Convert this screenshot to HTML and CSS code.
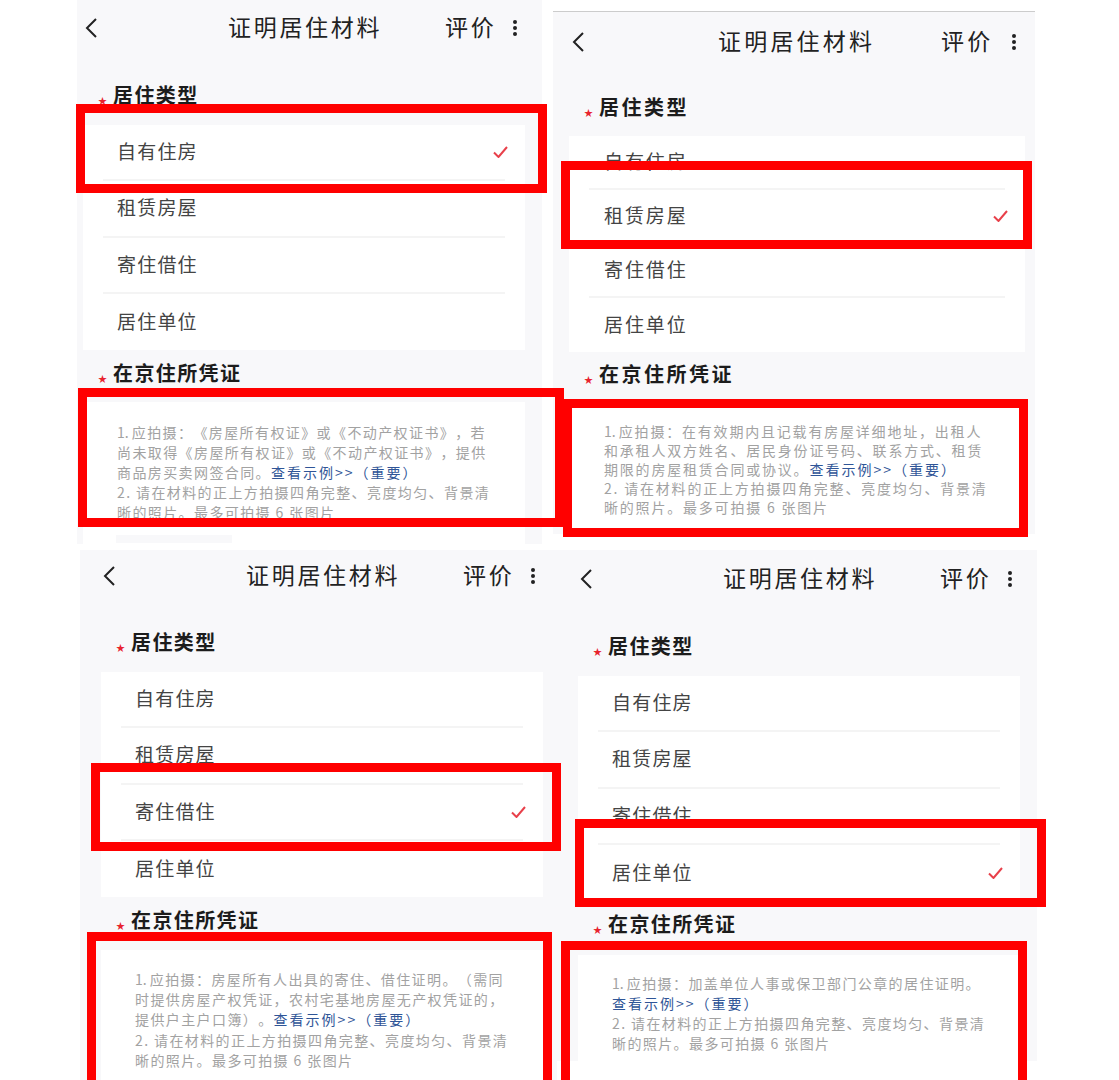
FILE: index.html
```html
<!DOCTYPE html>
<html lang="zh-CN">
<head>
  <meta charset="UTF-8" />
  <title>证明居住材料</title>
  <link rel="stylesheet" href="styles.css">
</head>
<body>
  <svg class="defs" width="0" height="0" aria-hidden="true">
    <symbol id="back" viewBox="0 0 12 20"><path d="M11 1 2 10l9 9" fill="none" stroke="#222" stroke-width="2"/></symbol>
    <symbol id="tick" viewBox="0 0 15 12"><path d="M1 6.5 5.5 11 14 1" fill="none" stroke="#e8404a" stroke-width="2"/></symbol>
  </svg>

  <!-- 自有住房 -->
  <section class="shot shot-1">
    <div class="nav">
      <svg class="back"><use href="#back"/></svg>
      <span class="nav-title">证明居住材料</span>
      <span class="nav-rate">评价</span>
      <span class="nav-more"><i></i><i></i><i></i></span>
    </div>
    <h2 class="sec-title first"><span class="star">★</span>居住类型</h2>
    <div class="card">
      <div class="row">自有住房<svg class="tick"><use href="#tick"/></svg></div>
      <div class="row">租赁房屋</div>
      <div class="row">寄住借住</div>
      <div class="row">居住单位</div>
    </div>
    <h2 class="sec-title"><span class="star">★</span>在京住所凭证</h2>
    <div class="notes">
      <p><span class="num">1. </span>应拍摄：《房屋所有权证》或《不动产权证书》，若<br>尚未取得《房屋所有权证》或《不动产权证书》，提供<br>商品房买卖网签合同。<a>查看示例&gt;&gt;（重要）</a><br>2. 请在材料的正上方拍摄四角完整、亮度均匀、背景清<br>晰的照片。最多可拍摄 6 张图片</p>
      <div class="thumb"></div>
    </div>
  </section>

  <!-- 租赁房屋 -->
  <section class="shot shot-2">
    <div class="nav">
      <svg class="back"><use href="#back"/></svg>
      <span class="nav-title">证明居住材料</span>
      <span class="nav-rate">评价</span>
      <span class="nav-more"><i></i><i></i><i></i></span>
    </div>
    <h2 class="sec-title first"><span class="star">★</span>居住类型</h2>
    <div class="card">
      <div class="row">自有住房</div>
      <div class="row">租赁房屋<svg class="tick"><use href="#tick"/></svg></div>
      <div class="row">寄住借住</div>
      <div class="row">居住单位</div>
    </div>
    <h2 class="sec-title"><span class="star">★</span>在京住所凭证</h2>
    <div class="notes">
      <p><span class="num">1. </span>应拍摄：在有效期内且记载有房屋详细地址，出租人<br>和承租人双方姓名、居民身份证号码、联系方式、租赁<br>期限的房屋租赁合同或协议。<a>查看示例&gt;&gt;（重要）</a><br>2. 请在材料的正上方拍摄四角完整、亮度均匀、背景清<br>晰的照片。最多可拍摄 6 张图片</p>
    </div>
  </section>

  <!-- 寄住借住 -->
  <section class="shot shot-3">
    <div class="nav">
      <svg class="back"><use href="#back"/></svg>
      <span class="nav-title">证明居住材料</span>
      <span class="nav-rate">评价</span>
      <span class="nav-more"><i></i><i></i><i></i></span>
    </div>
    <h2 class="sec-title first"><span class="star">★</span>居住类型</h2>
    <div class="card">
      <div class="row">自有住房</div>
      <div class="row">租赁房屋</div>
      <div class="row">寄住借住<svg class="tick"><use href="#tick"/></svg></div>
      <div class="row">居住单位</div>
    </div>
    <h2 class="sec-title"><span class="star">★</span>在京住所凭证</h2>
    <div class="notes">
      <p><span class="num">1. </span>应拍摄：房屋所有人出具的寄住、借住证明。（需同<br>时提供房屋产权凭证，农村宅基地房屋无产权凭证的，<br>提供户主户口簿）。<a>查看示例&gt;&gt;（重要）</a><br>2. 请在材料的正上方拍摄四角完整、亮度均匀、背景清<br>晰的照片。最多可拍摄 6 张图片</p>
    </div>
  </section>

  <!-- 居住单位 -->
  <section class="shot shot-4">
    <div class="nav">
      <svg class="back"><use href="#back"/></svg>
      <span class="nav-title">证明居住材料</span>
      <span class="nav-rate">评价</span>
      <span class="nav-more"><i></i><i></i><i></i></span>
    </div>
    <h2 class="sec-title first"><span class="star">★</span>居住类型</h2>
    <div class="card">
      <div class="row">自有住房</div>
      <div class="row">租赁房屋</div>
      <div class="row">寄住借住</div>
      <div class="row">居住单位<svg class="tick"><use href="#tick"/></svg></div>
    </div>
    <h2 class="sec-title"><span class="star">★</span>在京住所凭证</h2>
    <div class="notes">
      <p><span class="num">1. </span>应拍摄：加盖单位人事或保卫部门公章的居住证明。<br><a>查看示例&gt;&gt;（重要）</a><br>2. 请在材料的正上方拍摄四角完整、亮度均匀、背景清<br>晰的照片。最多可拍摄 6 张图片</p>
    </div>
  </section>

  <!-- 红框标注 -->
  <div class="mark mark-1"></div>
  <div class="mark mark-2"></div>
  <div class="mark mark-3"></div>
  <div class="mark mark-4"></div>
  <div class="mark mark-5"></div>
  <div class="mark mark-6"></div>
  <div class="mark mark-7"></div>
  <div class="mark mark-8"></div>
</body>
</html>
```

FILE: styles.css
```css
html, body {
  margin: 0;
  padding: 0;
}

body {
  position: relative;
  width: 1119px;
  height: 1080px;
  overflow: hidden;
  background: #fff;
  font-family: "Noto Sans CJK SC", "Noto Sans", sans-serif;
  text-spacing-trim: space-all;
}

.defs {
  position: absolute;
}

/* the four phone captures sit on a free canvas */
.shot {
  position: absolute;
  display: flex;
  flex-direction: column;
  overflow: hidden;
  background: #f8f8fa;
  --title-x: 131px;
  --rate-x: 65px;
  --more-x: 18px;
  --nav-ls: 2.7px;
  --sec-ls: 1.4px;
  --sec-gap: 9px;
  --card-gap: 16px;
  --row-ls: 1.2px;
  --text-x: 14px;
  --note-ls: 1.4px;
}

.shot-1 {
  left: 77px;
  top: 0;
  width: 465px;
  height: 544px;
  --nav-h: 54px;
  --nav-x: 8px;
  --first-gap: 27px;
  --card-x: 6px;
  --card-w: 442px;
  --row-h: 56.25px;
  --notes-gap: 15px;
  --notes-top: 20px;
  --line-h: 20px;
}

/* this capture was pasted about 3% wider than the others */
.shot-2 {
  left: 553px;
  top: 11px;
  width: 482px;
  height: 522px;
  border-top: 1px solid #ccc;
  --title-x: 134px;
  --rate-x: 71px;
  --more-x: 21px;
  --nav-ls: 3.2px;
  --sec-ls: 2.5px;
  --sec-gap: 8px;
  --card-gap: 15px;
  --row-ls: 1.9px;
  --text-x: 15px;
  --note-ls: 1.8px;
  --nav-h: 58px;
  --nav-x: 19px;
  --first-gap: 23px;
  --card-x: 16px;
  --card-w: 456px;
  --row-h: 54px;
  --notes-gap: 15px;
  --notes-top: 19px;
  --line-h: 19px;
}

.shot-3 {
  left: 80px;
  top: 550px;
  width: 477px;
  height: 530px;
  --nav-h: 50px;
  --nav-x: 23px;
  --first-gap: 28px;
  --card-x: 21px;
  --card-w: 442px;
  --row-h: 56.25px;
  --notes-gap: 16px;
  --notes-top: 19px;
  --line-h: 20.2px;
}

.shot-4 {
  left: 557px;
  top: 550px;
  width: 480px;
  height: 511px;
  --nav-h: 56px;
  --nav-x: 23px;
  --first-gap: 26px;
  --card-x: 21px;
  --card-w: 442px;
  --row-h: 56.25px;
  --notes-gap: 17px;
  --notes-top: 18px;
  --line-h: 20px;
}

.nav {
  display: flex;
  align-items: center;
  flex: none;
  box-sizing: border-box;
  height: var(--nav-h);
  padding: 0 0 3px var(--nav-x);
  color: #222;
  font-size: 23px;
  letter-spacing: var(--nav-ls);
  white-space: nowrap;
}

.back {
  width: 12px;
  height: 20px;
  flex: none;
  margin-top: 5px;
}

.nav-title {
  width: 152px;
  margin-left: var(--title-x);
}

.nav-rate {
  width: 50px;
  margin-left: var(--rate-x);
}

.nav-more {
  display: flex;
  flex-direction: column;
  gap: 2px;
  margin: 5px 0 0 var(--more-x);
}

.nav-more i {
  width: 4px;
  height: 4px;
  border-radius: 50%;
  background: #222;
}

.sec-title {
  display: flex;
  align-items: center;
  flex: none;
  height: 28px;
  margin: var(--sec-gap) 0 0 calc(var(--card-x) + 15px);
  color: #1c1c1c;
  font-size: 20px;
  font-weight: 700;
  line-height: 26px;
  letter-spacing: var(--sec-ls);
}

.sec-title.first {
  margin-top: var(--first-gap);
}

.star {
  width: 15px;
  padding-top: 11px;
  color: #e8232e;
  font-size: 9px;
  line-height: 17px;
  letter-spacing: 0;
}

.card {
  flex: none;
  width: var(--card-w);
  margin: var(--card-gap) 0 0 var(--card-x);
  background: #fff;
}

.row {
  display: flex;
  align-items: center;
  justify-content: space-between;
  box-sizing: border-box;
  height: var(--row-h);
  margin: 0 20px;
  padding: 0 0 3px var(--text-x);
  border-bottom: 2px solid #f4f4f4;
  color: #444;
  font-size: 19px;
  letter-spacing: var(--row-ls);
}

.row:last-child {
  border-bottom: 0;
}

.tick {
  width: 15px;
  height: 12px;
  margin: 3px -3px 0 0;
}

.notes {
  flex: 1;
  width: var(--card-w);
  margin: var(--notes-gap) 0 0 var(--card-x);
  padding-top: var(--notes-top);
  background: #fff;
}

.notes p {
  margin: 0 0 0 calc(var(--text-x) + 20px);
  color: #a2a2a2;
  font-size: 14px;
  line-height: var(--line-h);
  letter-spacing: var(--note-ls);
  white-space: nowrap;
}

.notes .num {
  letter-spacing: 0;
}

.notes a {
  color: #2f5597;
  letter-spacing: 2px;
}

.thumb {
  width: 116px;
  height: 8px;
  margin: 13px 0 0 33px;
  background: #f8f8fa;
}

/* red boxes drawn over the captures */
.mark {
  position: absolute;
  box-sizing: border-box;
  border: 9px solid #f00;
}

.mark-1 { left: 76px; top: 104px; width: 471px; height: 89px; }
.mark-2 { left: 78px; top: 388px; width: 486px; height: 139px; }
.mark-3 { left: 561px; top: 161px; width: 471px; height: 88px; }
.mark-4 { left: 563px; top: 399px; width: 465px; height: 138px; }
.mark-5 { left: 91px; top: 763px; width: 470px; height: 88px; }
.mark-6 { left: 87px; top: 932px; width: 465px; height: 148px; border-bottom: 0; }
.mark-7 { left: 575px; top: 819px; width: 471px; height: 88px; }
.mark-8 { left: 561px; top: 941px; width: 466px; height: 139px; border-bottom: 0; }
```
